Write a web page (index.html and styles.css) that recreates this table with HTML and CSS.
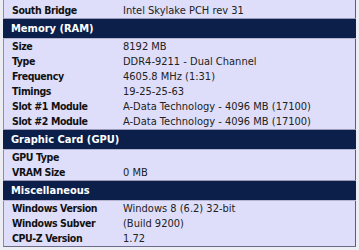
FILE: index.html
```html
<!DOCTYPE html>
<html>
<head>
<meta charset="utf-8">
<link rel="stylesheet" href="styles.css">
</head>
<body>
<div class="panel">
  <div class="row first"><span class="label">South Bridge</span><span class="value">Intel Skylake PCH rev 31</span></div>
  <div class="section">Memory (RAM)</div>
  <div class="row"><span class="label">Size</span><span class="value">8192 MB</span></div>
  <div class="row"><span class="label">Type</span><span class="value">DDR4-9211 - Dual Channel</span></div>
  <div class="row"><span class="label">Frequency</span><span class="value">4605.8 MHz (1:31)</span></div>
  <div class="row"><span class="label">Timings</span><span class="value">19-25-25-63</span></div>
  <div class="row"><span class="label">Slot #1 Module</span><span class="value">A-Data Technology - 4096 MB (17100)</span></div>
  <div class="row"><span class="label">Slot #2 Module</span><span class="value">A-Data Technology - 4096 MB (17100)</span></div>
  <div class="section">Graphic Card (GPU)</div>
  <div class="row"><span class="label">GPU Type</span><span class="value"></span></div>
  <div class="row"><span class="label">VRAM Size</span><span class="value">0 MB</span></div>
  <div class="section">Miscellaneous</div>
  <div class="row"><span class="label">Windows Version</span><span class="value">Windows 8 (6.2) 32-bit</span></div>
  <div class="row"><span class="label">Windows Subver</span><span class="value">(Build 9200)</span></div>
  <div class="row"><span class="label">CPU-Z Version</span><span class="value">1.72</span></div>
</div>
</body>
</html>
```
FILE: styles.css
```css
html, body {
  margin: 0;
  padding: 0;
  background: #eceef4;
}
body {
  font-family: Tahoma, "DejaVu Sans Condensed", "DejaVu Sans", sans-serif;
  font-size: 11px;
  color: #1a1a1a;
}
.panel {
  margin: 0 3px 0 3px;
  width: 353px;
  box-sizing: border-box;
  background: #dedefa;
  border-left: 1px solid #8c8ca8;
  border-right: 1px solid #5c5c80;
  border-bottom: 1px solid #6c6c8c;
}
.row {
  display: grid;
  grid-template-columns: 111px 1fr;
  height: 15px;
  line-height: 15px;
  padding-left: 8px;
}
.row.first {
  height: 18px;
  padding-top: 3px;
  box-sizing: border-box;
  line-height: 15px;
}
.label {
  font-weight: bold;
  font-size: 10.5px;
  letter-spacing: -0.4px;
  color: #111;
  white-space: nowrap;
}
.value {
  color: #222;
  white-space: nowrap;
}
.section {
  height: 21px;
  box-sizing: border-box;
  background: #0b1f4a;
  border-top: 1px solid #9a9ab8;
  border-bottom: 1px solid #b4b4d0;
  color: #fff;
  font-weight: bold;
  font-size: 11px;
  line-height: 19px;
  padding-left: 8px;
  margin-left: -1px;
  margin-right: -1px;
}
```
